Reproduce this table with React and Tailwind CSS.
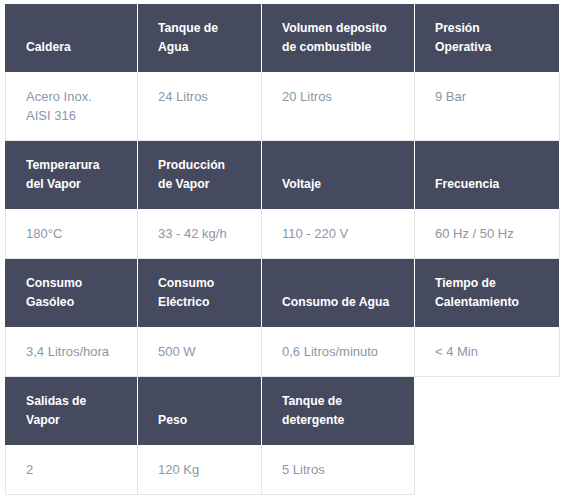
import React from 'react';

const rows = [
  {
    head: ['Caldera', 'Tanque de Agua', 'Volumen deposito de combustible', 'Presión Operativa'],
    data: [['Acero Inox.', 'AISI 316'], ['24 Litros'], ['20 Litros'], ['9 Bar']],
  },
  {
    head: ['Temperarura del Vapor', 'Producción de Vapor', 'Voltaje', 'Frecuencia'],
    data: [['180°C'], ['33 - 42 kg/h'], ['110 - 220 V'], ['60 Hz / 50 Hz']],
  },
  {
    head: ['Consumo Gasóleo', 'Consumo Eléctrico', 'Consumo de Agua', 'Tiempo de Calentamiento'],
    data: [['3,4 Litros/hora'], ['500 W'], ['0,6 Litros/minuto'], ['< 4 Min']],
  },
  {
    head: ['Salidas de Vapor', 'Peso', 'Tanque de detergente'],
    data: [['2'], ['120 Kg'], ['5 Litros']],
  },
];

// header labels are broken by hand, like the original site
const headLines = {
  'Tanque de Agua': ['Tanque de', 'Agua'],
  'Volumen deposito de combustible': ['Volumen deposito', 'de combustible'],
  'Presión Operativa': ['Presión', 'Operativa'],
  'Temperarura del Vapor': ['Temperarura', 'del Vapor'],
  'Producción de Vapor': ['Producción', 'de Vapor'],
  'Consumo Gasóleo': ['Consumo', 'Gasóleo'],
  'Consumo Eléctrico': ['Consumo', 'Eléctrico'],
  'Tiempo de Calentamiento': ['Tiempo de', 'Calentamiento'],
  'Salidas de Vapor': ['Salidas de', 'Vapor'],
  'Tanque de detergente': ['Tanque de', 'detergente'],
};

function HeadCell({ label, first }) {
  const lines = headLines[label] || [label];
  return (
    <div
      className={`flex items-end bg-[#464a5f] text-white font-bold text-[12.2px] leading-[19px] pl-[20px] pr-2 py-[15px] h-[68px] border-r border-white ${first ? 'border-l border-l-[#464a5f]' : ''}`}
    >
      <div>
        {lines.map((l) => (
          <div key={l}>{l}</div>
        ))}
      </div>
    </div>
  );
}

function DataCell({ lines, first }) {
  return (
    <div
      className={`bg-white text-[#8a97a7] text-[13px] leading-[19px] pl-[20px] pr-2 pt-[15px] pb-[15px] border-r border-b border-[#e6e6e6] ${first ? 'border-l' : ''}`}
    >
      {lines.map((l) => (
        <div key={l}>{l}</div>
      ))}
    </div>
  );
}

export default function App() {
  return (
    <div className="min-h-screen bg-white pl-[5px] pt-[4px]" style={{ fontFamily: '"Liberation Sans", Arial, sans-serif' }}>
      <div className="grid grid-cols-[133px_124px_153px_145px] w-[555px]">
        {rows.map((row, ri) => (
          <React.Fragment key={ri}>
            {[0, 1, 2, 3].map((ci) =>
              row.head[ci] ? (
                <HeadCell key={'h' + ci} label={row.head[ci]} first={ci === 0} />
              ) : (
                <div key={'h' + ci} />
              )
            )}
            {[0, 1, 2, 3].map((ci) =>
              row.data[ci] ? (
                <DataCell key={'d' + ci} lines={row.data[ci]} first={ci === 0} />
              ) : (
                <div key={'d' + ci} />
              )
            )}
          </React.Fragment>
        ))}
      </div>
    </div>
  );
}
